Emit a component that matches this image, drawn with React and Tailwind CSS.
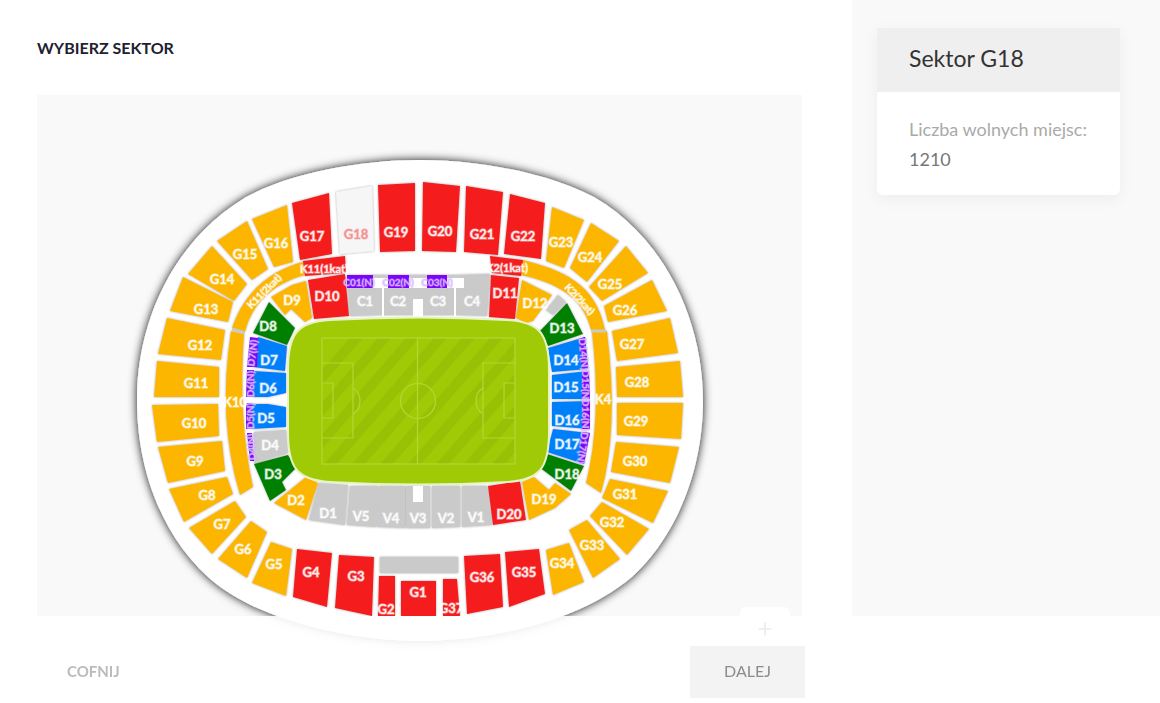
import React from "react";
import { Plus } from "lucide-react";

const COLORS = {
  red: "#f41e1e",
  gold: "#fcb606",
  grey: "#cacaca",
  blue: "#067ffa",
  green: "#058005",
  picked: "#f6f6f6",
};

// [name, colour, outline, label x, label y]
const SECTORS = [
  ["G17", "red", "292,203 329,193 332,254 300,260", 312, 236],
  ["G18", "picked", "336,192 372,186 374,251 340,254", 356, 234],
  ["G19", "red", "378,185 415,183 415,251 380,252", 396, 232],
  ["G20", "red", "423,182 460,186 456,252 422,251", 440, 231],
  ["G21", "red", "466,186 503,192 498,255 464,252", 482, 234],
  ["G22", "red", "510,194 545,203 541,259 504,254", 523, 236],
  ["G23", "gold", "552,207 584,220 564,268 546,261", 561, 242],
  ["G24", "gold", "591,223 619,241 587,282 570,268", 590, 257],
  ["G25", "gold", "626,246 648,273 602,301 589,287", 610, 284],
  ["G26", "gold", "604,306 652,280 667,311 608,322", 625, 310],
  ["G27", "gold", "612,331 670,318 678,353 617,361", 632, 344],
  ["G28", "gold", "616,367 680,361 683,397 617,397", 637, 382],
  ["G29", "gold", "617,403 683,403 681,439 617,435", 636, 421],
  ["G30", "gold", "616,442 679,447 670,483 611,472", 635, 461],
  ["G31", "gold", "602,498 610,479 668,491 653,523", 625, 494],
  ["G32", "gold", "590,516 602,502 649,529 627,555", 612, 522],
  ["G33", "gold", "569,530 587,520 620,559 593,578", 592, 545],
  ["G34", "gold", "546,550 569,543 584,582 553,595", 562, 563],
  ["G35", "red", "505,552 539,549 545,594 509,607", 524, 572],
  ["G36", "red", "464,556 500,554 503,607 467,614", 482, 577],
  ["G1", "red", "401,581 436,581 436,616 401,616", 418, 592],
  ["G3", "red", "339,555 374,557 372,616 335,608", 356, 576],
  ["G4", "red", "297,549 332,553 327,607 293,597", 311, 572],
  ["G5", "gold", "271,542 292,549 286,596 252,583", 274, 564],
  ["G6", "gold", "251,521 267,532 247,578 218,559", 243, 549],
  ["G7", "gold", "189,528 235,501 246,517 212,554", 222, 524],
  ["G8", "gold", "169,489 227,477 233,494 184,522", 207, 495],
  ["G9", "gold", "158,447 222,441 225,471 168,483", 195, 461],
  ["G10", "gold", "152,405 218,404 219,436 157,442", 194, 423],
  ["G11", "gold", "157,361 219,367 219,397 154,397", 196, 383],
  ["G12", "gold", "167,318 225,330 221,360 158,354", 200, 345],
  ["G13", "gold", "183,277 233,302 228,322 170,311", 206, 309],
  ["G14", "gold", "188,274 212,246 247,284 234,301", 222, 279],
  ["G15", "gold", "217,241 247,221 268,269 252,280", 245, 254],
  ["G16", "gold", "252,219 287,205 293,262 274,267", 276, 243],
  ["D9", "gold", "271,297 292,285 306,281 312,318 305,322 291,309 285,315", 292, 300],
  ["D10", "red", "308,280 345,274 349,316 314,319", 327, 296],
  ["D11", "red", "491,275 519,278 515,319 489,317", 505, 293],
  ["D12", "gold", "522,280 552,295 533,321 526,323 516,318", 535, 303],
  ["D13", "green", "567,303 583,334 548,346 539,332", 562, 328],
  ["D14", "blue", "548,348 585,337 588,369 552,372", 566, 360],
  ["D15", "blue", "552,375 588,371 589,399 552,399", 566, 387],
  ["D16", "blue", "552,402 589,401 589,429 552,426", 567, 420],
  ["D17", "blue", "553,429 589,433 584,464 547,452", 567, 444],
  ["D18", "green", "547,454 584,466 571,491 539,467", 567, 474],
  ["D19", "gold", "522,482 534,477 549,490 555,483 571,494 555,508 529,520", 544, 499],
  ["D20", "red", "488,486 520,481 526,520 493,525", 509, 514],
  ["V1", "grey", "462,486 487,486 492,525 462,527", 476, 517],
  ["V2", "grey", "432,486 460,486 460,527 432,528", 446, 518],
  ["V3", "grey", "406,486 430,486 430,528 406,528", 418, 518],
  ["V4", "grey", "379,486 405,486 405,528 377,527", 391, 518],
  ["V5", "grey", "350,486 378,486 376,527 347,525", 361, 516],
  ["D1", "grey", "319,483 348,485 345,525 309,520", 328, 513],
  ["D2", "gold", "306,477 318,483 306,520 274,503", 296, 500],
  ["D3", "green", "254,464 288,455 296,468 282,482 286,490 270,501", 273, 474],
  ["D4", "grey", "254,432 286,430 288,453 254,463", 270, 445],
  ["D5", "blue", "252,404 268,404 286,407 286,427 252,429", 266, 418],
  ["D6", "blue", "254,371 286,373 286,393 268,397 253,397", 268, 388],
  ["D7", "blue", "258,337 287,346 285,371 253,367", 269, 360],
  ["D8", "green", "269,302 295,328 287,345 253,333", 268, 326],
  ["C1", "grey", "347,275 383,275 383,315 350,316", 365, 301],
  ["C2", "grey", "383,275 415,275 415,315 383,315", 398, 301],
  ["C3", "grey", "415,275 455,275 455,315 415,315", 438, 301],
  ["C4", "grey", "455,275 490,274 487,316 455,315", 472, 301],
];

// Club boxes behind the lower tier: [name, outline, label x, label y, rotation]
const BOXES = [
  ["D7(N)", "250,337 258,338 257,367 247,367", 252, 353, -83],
  ["D6(N)", "247,370 254,370 253,397 246,397", 250, 384, -90],
  ["D5(N)", "246,403 252,403 252,429 246,429", 250, 416, -90],
  ["D4(N)", "247,433 252,433 254,461 250,461", 251, 447, -94],
  ["D14(N)", "579,339 585,337 588,369 582,369", 584, 354, 85],
  ["D15(N)", "582,371 589,371 590,399 582,399", 586, 386, 90],
  ["D16(N)", "582,401 590,401 590,429 582,429", 586, 415, 90],
  ["D17(N)", "582,432 590,433 584,464 579,463", 583, 448, 98],
  ["C01(N)", "347,275 373,275 373,288 347,288", 359, 282, 0],
  ["C02(N)", "388,275 409,275 409,288 388,288", 398, 282, 0],
  ["C03(N)", "427,275 447,275 447,288 427,288", 437, 282, 0],
];

const STRIPES = [-82, -54, -26, 2, 30, 58, 86, 114, 142, 170];

function Label({ x, y, size = 13, rotate = 0, fill = "#fff", halo = "#fff", children }) {
  return (
    <text
      x={x}
      y={y}
      transform={`rotate(${rotate} ${x} ${y})`}
      textAnchor="middle"
      dominantBaseline="central"
      fontSize={size}
      fontWeight="700"
      fill={fill}
      fillOpacity="0.9"
      stroke={halo}
      strokeOpacity="0.4"
      strokeWidth="1.4"
    >
      {children}
    </text>
  );
}

function Pitch() {
  return (
    <g>
      <path
        d="M288 370C288 334 297 322 330 320Q418 315 507 320C540 322 549 334 549 370V432C549 468 540 480 507 482Q418 487 330 482C297 480 288 468 288 432Z"
        fill="#a1ca06"
        stroke="#e6f3c4"
        strokeWidth="2"
      />
      <clipPath id="field">
        <rect x="322" y="338" width="193" height="126" />
      </clipPath>
      <g clipPath="url(#field)" fill="#98c106">
        {STRIPES.map((s) => (
          <polygon key={s} points={`${322 + s},464 ${335 + s},464 ${445 + s},338 ${432 + s},338`} />
        ))}
      </g>
      <g fill="none" stroke="#b2d832" strokeWidth="1.2">
        <rect x="322" y="338" width="193" height="126" />
        <path d="M417.500 338V464M322 363H353V438H322M322 383H333V418H322M515 363H483V438H515M515 383H504V418H515" />
        <path d="M353 388Q360 392 360 401T353 414M483 388Q476 392 476 401T483 414" />
        <circle cx="418" cy="401" r="17.500" />
      </g>
    </g>
  );
}

function StadiumMap() {
  return (
    <svg
      viewBox="37 95 765 560"
      className="block w-full"
      role="img"
      aria-label="Plan sektorów stadionu"
      fontFamily="Lato, sans-serif"
    >
      <defs>
        <filter id="ringShadow" x="-10%" y="-10%" width="120%" height="120%">
          <feDropShadow dx="0" dy="0" stdDeviation="5" floodColor="#000" floodOpacity="0.95" />
        </filter>
        <filter id="sectorShadow">
          <feDropShadow dx="0" dy="0" stdDeviation="0.8" floodColor="#555" floodOpacity="0.55" />
        </filter>
      </defs>

      <path
        d="M420 160C480 160 548 173 594 197C668 240 703 325 703 400C703 470 677 535 633 576C580 622 490 641 420 641C350 641 255 620 208 577C162 535 137 470 137 400C137 325 170 243 246 197C290 173 360 160 420 160Z"
        fill="#fff"
        filter="url(#ringShadow)"
      />

      <g filter="url(#sectorShadow)">
        {SECTORS.map(([name, color, points]) => (
          <polygon key={name} points={points} fill={COLORS[color]} />
        ))}
        <polygon points="380,557 458,557 458,573 380,573" fill={COLORS.grey} />
        <polygon points="558,295 566,302 553,315 546,310" fill={COLORS.grey} />
        <polygon points="379,576 395,576 395,616 378,616" fill={COLORS.red} />
        <polygon points="443,579 457,579 460,616 443,616" fill={COLORS.red} />
        <path d="M303 262C278 268 246 286 232 328L245 332C252 304 272 284 305 275Z" fill={COLORS.gold} />
        <path d="M523 260C562 270 596 283 605 330L591 330C585 305 568 285 521 275Z" fill={COLORS.gold} />
        <path d="M231 331Q217 420 240 495L253 487Q238 420 244 334Z" fill={COLORS.gold} />
        <path d="M592 332L607 331Q619 430 601 493L586 483Q602 420 592 332Z" fill={COLORS.gold} />
        <polygon points="303,261 345,256 346,273 305,276" fill={COLORS.red} />
        <polygon points="490,256 523,260 521,276 492,273" fill={COLORS.red} />
      </g>

      <path d="M383 288V316M415 299V316M455 288V316" stroke="#fff" strokeWidth="2" />
      <path d="M232 329L245 333M591 331H606" stroke={COLORS.grey} strokeWidth="3" />

      <g fill="#fff">
        <rect x="373" y="278" width="91" height="10" />
        <rect x="413" y="299" width="10" height="18" />
        <rect x="413" y="486" width="10" height="16" />
        <polygon points="268,400 287,394 287,407" />
      </g>

      {BOXES.map(([name, points]) => (
        <polygon key={name} points={points} fill="#7a05fa" />
      ))}

      <Pitch />

      {BOXES.map(([name, , x, y, rotate]) => (
        <Label key={name} x={x} y={y} size={10} rotate={rotate} fill="#e9d5ff" halo="#c9a0ff">
          {name}
        </Label>
      ))}
      {SECTORS.map(([name, color, , x, y]) => (
        <Label
          key={name}
          x={x}
          y={y}
          fill={color === "picked" ? "#ef7b7b" : "#fff"}
          halo={color === "picked" ? "#f9a0a0" : "#fff"}
        >
          {name}
        </Label>
      ))}
      <Label x={386} y={609}>G2</Label>
      <Label x={451} y={608}>G37</Label>
      <Label x={324} y={268} size={11}>K11(1kat)</Label>
      <Label x={507} y={267} size={11}>K2(1kat)</Label>
      <Label x={264} y={291} size={10} rotate={-45}>K11(2kat)</Label>
      <Label x={580} y={299} size={10} rotate={47}>K2(2kat)</Label>
      <Label x={235} y={402}>K10</Label>
      <Label x={603} y={399}>K4</Label>
    </svg>
  );
}

function SectorCard({ name, seats }) {
  return (
    <section className="overflow-hidden rounded-b-md bg-white shadow-[0_4px_16px_rgba(0,0,0,0.05)]">
      <h2 className="bg-[#efefef] px-8 pt-[14px] pb-[18px] text-[23px] leading-8 text-[#333]">{name}</h2>
      <dl className="px-8 pt-[22px] pb-[21px] text-lg leading-[30px]">
        <dt className="whitespace-nowrap text-[#aaa]">Liczba wolnych miejsc:</dt>
        <dd className="text-[#777]">{seats}</dd>
      </dl>
    </section>
  );
}

export default function App() {
  return (
    <div className="flex min-h-screen bg-white font-['Lato',sans-serif]">
      <main className="flex min-w-0 flex-1 flex-col pt-9 pr-[50px] pl-[37px]">
        <h1 className="text-base leading-6 font-bold text-[#1d2130]">WYBIERZ SEKTOR</h1>
        <div className="relative mt-[35px] flex-1 bg-[#f9f9f9]">
          <StadiumMap />
          <button
            type="button"
            aria-label="Powiększ"
            className="absolute right-3 bottom-[46px] flex h-[50px] w-[50px] items-start justify-center rounded-md bg-white pt-3 text-[#333]"
          >
            <Plus size={20} strokeWidth={2} />
          </button>
        </div>
      </main>

      <aside className="w-[308px] shrink-0 bg-[#f9f9f9] pt-7 pr-10 pl-[25px]">
        <SectorCard name="Sektor G18" seats="1210" />
      </aside>

      <footer className="fixed inset-x-0 bottom-0 bg-white/90 pt-[30px] pb-[5px]">
        <div className="mr-[308px] flex items-center justify-between pr-[47px] pl-[67px]">
          <button type="button" className="pb-[2px] text-[15px] font-bold text-[#bbb]">COFNIJ</button>
          <button type="button" className="h-[52px] w-[115px] bg-[#f3f3f3] pb-[2px] text-base text-[#8c8c8c]">
            DALEJ
          </button>
        </div>
      </footer>
    </div>
  );
}
